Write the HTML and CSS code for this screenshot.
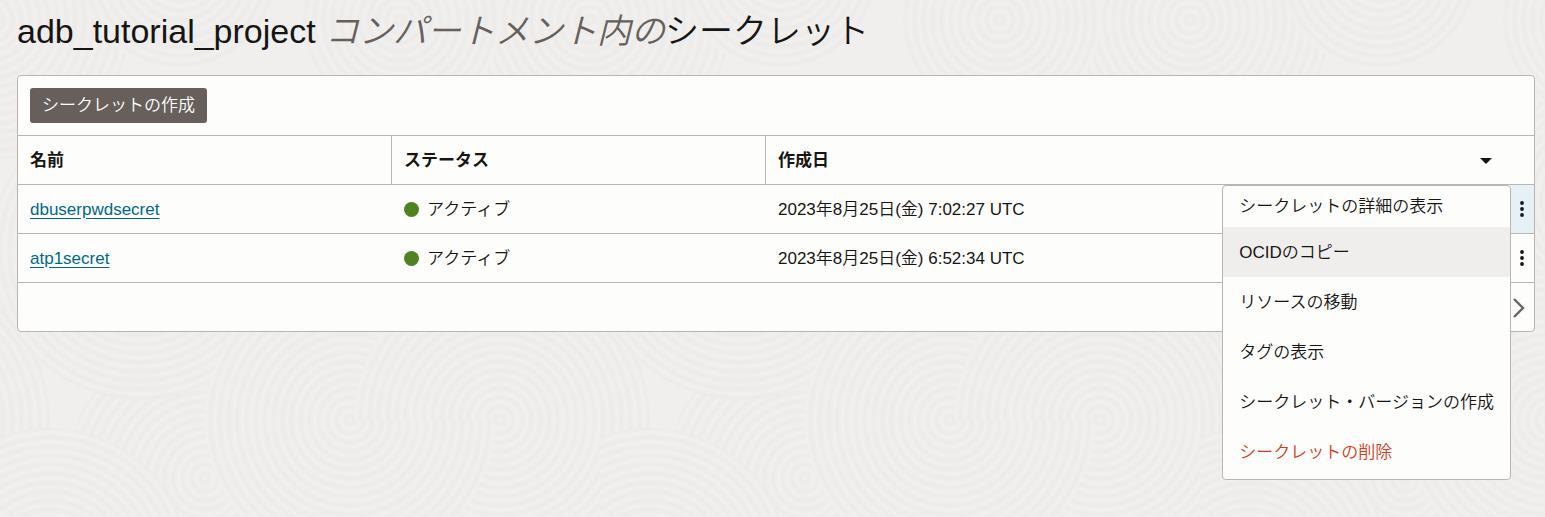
FILE: index.html
```
<!DOCTYPE html>
<html lang="ja">

<head>
    <meta charset="UTF-8">
    <meta name="viewport" content="width=device-width, initial-scale=1.0">
    <title>シークレット</title>
    <link rel="stylesheet" href="styles.css">
</head>

<body>

    <!-- background rings -->
    <svg class="backdrop" width="100%" height="100%" aria-hidden="true">
        <defs>
            <radialGradient id="ring" gradientUnits="userSpaceOnUse" cx="0" cy="0" r="9" spreadMethod="repeat">
                <stop offset="0" stop-color="#f1f0ef"/>
                <stop offset="0.5" stop-color="#ecebea"/>
                <stop offset="1" stop-color="#f1f0ef"/>
            </radialGradient>
            <pattern id="tile" width="600" height="600" patternUnits="userSpaceOnUse">
                <rect width="600" height="600" fill="#f0efee"/>
                <g fill="url(#ring)">
                    <circle r="150" transform="translate(-100 420)"/>
                    <circle r="140" transform="translate(205 478)"/>
                    <circle r="150" transform="translate(140 250)"/>
                    <circle r="140" transform="translate(400 200)"/>
                    <circle r="140" transform="translate(590 560)"/>
                    <circle r="150" transform="translate(500 420)"/>
                    <circle r="145" transform="translate(350 420)"/>
                    <path d="M-146 0A150 150 0 0 1 0 -150V0Z" transform="translate(500 420)"/>
                    <circle r="140" transform="translate(50 568)"/>
                    <circle r="140" transform="translate(-10 20)"/>
                    <circle r="140" transform="translate(590 20)"/>
                    <circle r="100" transform="translate(400 20)"/>
                    <circle r="100" transform="translate(180 -30)"/>
                </g>
            </pattern>
        </defs>
        <rect width="100%" height="100%" fill="url(#tile)"/>
    </svg>

    <main class="page">
        <h1 class="title">adb_tutorial_project <em>コンパートメント内の</em>シークレット</h1>

        <section class="panel">
            <div class="toolbar">
                <button class="create" type="button">シークレットの作成</button>
            </div>

            <table class="secrets">
                <thead>
                    <tr>
                        <th class="col-name">名前</th>
                        <th class="col-status">ステータス</th>
                        <th class="col-date" colspan="2">
                            <div class="sort">
                                作成日
                                <svg width="12" height="6" viewBox="0 0 12 6"><path d="M0 0H12L6 6Z" fill="#161513"/></svg>
                            </div>
                        </th>
                    </tr>
                </thead>
                <tbody>
                    <tr>
                        <td><a href="#">dbuserpwdsecret</a></td>
                        <td><div class="status"><span class="dot"></span>アクティブ</div></td>
                        <td>2023年8月25日(金) 7:02:27 UTC</td>
                        <td class="actions open">
                            <button class="kebab" type="button" aria-label="アクション">
                                <svg width="4" height="16" viewBox="0 0 4 16" fill="#161513"><circle cx="2" cy="2" r="1.9"/><circle cx="2" cy="8" r="1.9"/><circle cx="2" cy="14" r="1.9"/></svg>
                            </button>
                            <ul class="menu">
                                <li><button type="button">シークレットの詳細の表示</button></li>
                                <li><button class="hover" type="button">OCIDのコピー</button></li>
                                <li><button type="button">リソースの移動</button></li>
                                <li><button type="button">タグの表示</button></li>
                                <li><button type="button">シークレット・バージョンの作成</button></li>
                                <li><button class="danger" type="button">シークレットの削除</button></li>
                            </ul>
                        </td>
                    </tr>
                    <tr>
                        <td><a href="#">atp1secret</a></td>
                        <td><div class="status"><span class="dot"></span>アクティブ</div></td>
                        <td>2023年8月25日(金) 6:52:34 UTC</td>
                        <td class="actions">
                            <button class="kebab" type="button" aria-label="アクション">
                                <svg width="4" height="16" viewBox="0 0 4 16" fill="#161513"><circle cx="2" cy="2" r="1.9"/><circle cx="2" cy="8" r="1.9"/><circle cx="2" cy="14" r="1.9"/></svg>
                            </button>
                        </td>
                    </tr>
                </tbody>
            </table>

            <div class="pager">
                <button class="next" type="button" aria-label="次">
                    <svg width="12" height="20" viewBox="0 0 12 20"><path d="M1 1L10 10L1 19" fill="none" stroke="#6b6560" stroke-width="2.4"/></svg>
                </button>
            </div>
        </section>
    </main>

</body>

</html>
```
FILE: styles.css
```
* {
    box-sizing: border-box;
}

body {
    position: relative;
    min-height: 100vh;
    margin: 0;
    background-color: #f0efee;
    color: #161513;
    font-family: "Liberation Sans", "Noto Sans CJK JP", sans-serif;
    font-size: 17px;
    font-weight: 350;
    line-height: 24px;
}

button {
    border: none;
    background: none;
    color: inherit;
    font: inherit;
    cursor: pointer;
}

svg {
    display: block;
}

.backdrop {
    position: absolute;
    top: 0;
    left: 0;
}

.page {
    position: relative;
    min-height: 100vh;
    padding: 7px 10px 0 17px;
}

.title {
    margin: 0 0 20px;
    font-size: 34px;
    font-weight: 350;
    line-height: 48px;
}

.title em {
    color: #665f5b;
}

.panel {
    border: 1px solid #bab5b0;
    border-radius: 4px;
    background-color: #fdfdfb;
}

.toolbar {
    padding: 12px;
}

.create {
    display: block;
    height: 35px;
    padding: 0 12px;
    border-radius: 3px;
    background-color: #665f5b;
    color: #fff;
}

/* Table */
.secrets {
    width: 100%;
    border-collapse: separate;
    border-spacing: 0;
    table-layout: fixed;
}

.secrets th,
.secrets td {
    height: 49px;
    padding: 1px 12px 0;
    border-top: 1px solid #bab5b0;
    text-align: left;
}

.secrets th + th {
    border-left: 1px solid #bab5b0;
}

.secrets td + td {
    padding-left: 13px;
}

.secrets a {
    color: #00688c;
    text-underline-offset: 3px;
}

.secrets .col-name {
    width: 373px;
}

.secrets .col-status {
    width: 374px;
}

.sort {
    display: flex;
    align-items: center;
    justify-content: space-between;
    padding-right: 30px;
}

.status {
    display: flex;
    align-items: center;
    gap: 8px;
}

.dot {
    width: 15px;
    height: 15px;
    border-radius: 50%;
    background-color: #508223;
}

.secrets .actions {
    position: relative;
    padding: 0;
}

.kebab {
    display: block;
    margin-left: auto;
    padding: 16px 10px;
}

.open .kebab {
    background-color: #e5f1f5;
}

/* Row menu */
.menu {
    position: absolute;
    top: 0;
    right: 23px;
    z-index: 1;
    margin: 0;
    padding: 0 0 2px;
    border: 1px solid #bab5b0;
    border-radius: 4px;
    background-color: #fdfdfb;
    list-style: none;
}

.menu button {
    display: block;
    width: 100%;
    padding: 14px 16px 12px;
    text-align: left;
    white-space: nowrap;
}

.menu li:first-child button {
    padding-top: 9px;
    padding-bottom: 8px;
}

.menu .hover {
    background-color: #f0eeed;
}

.menu .danger {
    color: #d63b25;
}

.pager {
    display: flex;
    align-items: center;
    justify-content: flex-end;
    height: 49px;
    padding: 1px 9px 0 0;
    border-top: 1px solid #bab5b0;
}

.next {
    padding: 0;
}
```
